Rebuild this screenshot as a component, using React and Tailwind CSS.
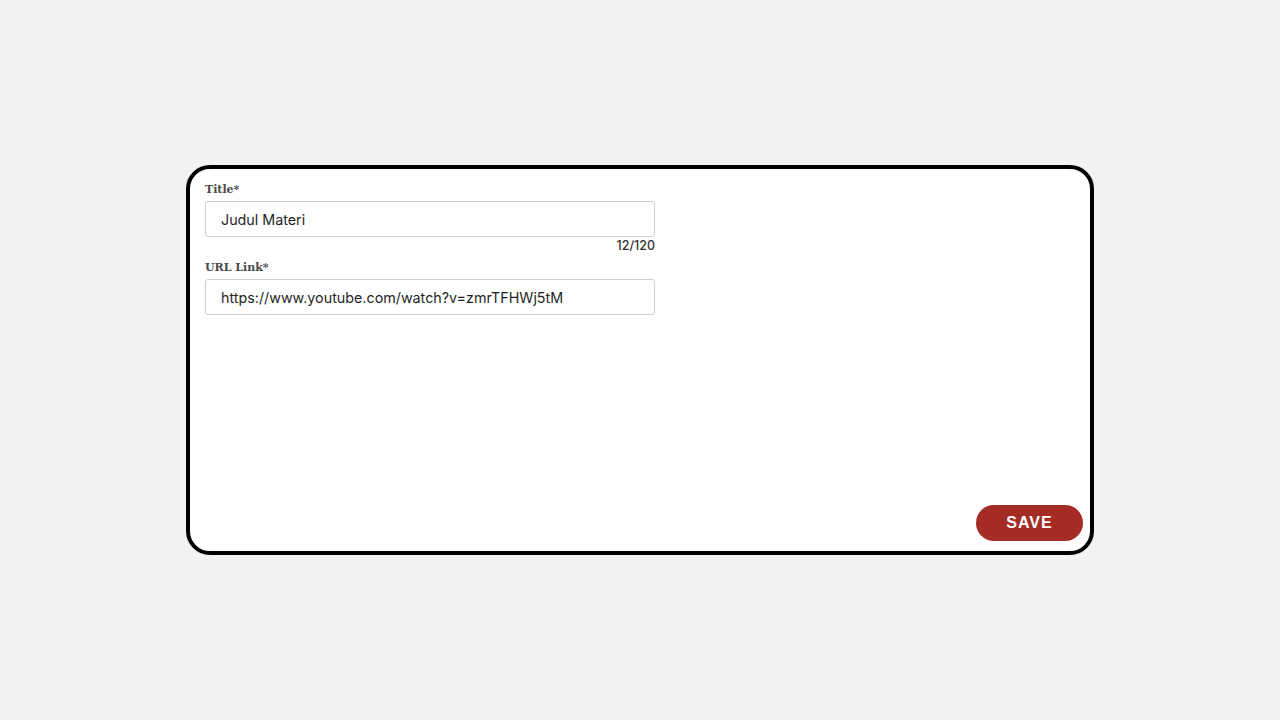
import React, { useState } from 'react';

export default function App() {
  const [title, setTitle] = useState('Judul Materi');
  const [url, setUrl] = useState('https://www.youtube.com/watch?v=zmrTFHWj5tM');

  return (
    <div className="min-h-screen w-full bg-[#f2f2f2] flex items-center justify-center font-['Inter',sans-serif]">
      <div className="w-[908px] h-[390px] bg-white border-4 border-black rounded-[24px] flex flex-col pt-[13px] pl-[15px] pr-[7px] pb-[10px]">
        <div className="w-[450px] flex flex-col">
          <label className="text-[11px] font-bold text-[#4a4a4a] leading-[16px] mb-[3px] font-['DejaVu_Serif',serif]">
            Title*
          </label>
          <input
            value={title}
            maxLength={120}
            onChange={(e) => setTitle(e.target.value)}
            className="h-[36px] w-full border border-[#cfcfcf] rounded-[3px] px-[15px] text-[14.3px] text-[#1f1f1f] outline-none"
          />
          <div className="text-right text-[12.5px] font-medium text-[#333] leading-[16px] mt-[1px]">
            {title.length}/120
          </div>
          <label className="text-[11px] font-bold text-[#4a4a4a] leading-[16px] mt-[6px] mb-[3px] font-['DejaVu_Serif',serif]">
            URL Link*
          </label>
          <input
            value={url}
            onChange={(e) => setUrl(e.target.value)}
            className="h-[36px] w-full border border-[#cfcfcf] rounded-[3px] px-[15px] text-[14.3px] text-[#1f1f1f] outline-none"
          />
        </div>
        <div className="flex-1" />
        <div className="flex justify-end">
          <button className="w-[107px] h-[36px] rounded-full bg-[#a52c24] text-white text-[16px] font-black tracking-[1px] font-['Liberation_Sans',sans-serif]">
            SAVE
          </button>
        </div>
      </div>
    </div>
  );
}
